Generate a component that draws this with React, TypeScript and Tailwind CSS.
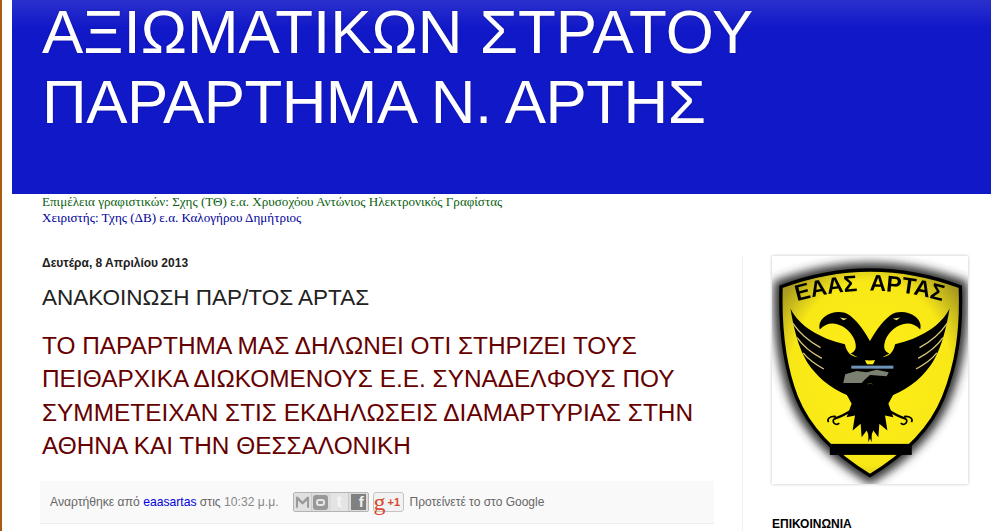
const postLines = [
  'ΤΟ ΠΑΡΑΡΤΗΜΑ ΜΑΣ ΔΗΛΩΝΕΙ ΟΤΙ ΣΤΗΡΙΖΕΙ ΤΟΥΣ',
  'ΠΕΙΘΑΡΧΙΚΑ ΔΙΩΚΟΜΕΝΟΥΣ Ε.Ε. ΣΥΝΑΔΕΛΦΟΥΣ ΠΟΥ',
  'ΣΥΜΜΕΤΕΙΧΑΝ ΣΤΙΣ ΕΚΔΗΛΩΣΕΙΣ ΔΙΑΜΑΡΤΥΡΙΑΣ ΣΤΗΝ',
  'ΑΘΗΝΑ ΚΑΙ ΤΗΝ ΘΕΣΣΑΛΟΝΙΚΗ',
]

function HalfEagle() {
  return (
    <g>
      {/* wing */}
      <path
        d="M182 205 C205 255 270 295 345 312 C350 338 368 356 400 350 L425 400 L395 476 C340 468 285 432 252 392 C222 358 198 305 182 205 Z"
        fill="#000"
      />
      {/* neck and head */}
      <path
        d="M424 310 C408 280 388 248 360 226 C340 210 303 214 284 230 C270 242 266 256 270 268 C285 252 302 247 322 252 C345 258 366 278 374 300 C380 318 380 332 362 340 L400 360 L425 360 Z"
        fill="#000"
      />
      <path d="M330 232 L352 236 L340 240 Z" fill="#e8e060" />
      <path d="M188 248 C210 280 240 305 272 322" stroke="#d8c878" strokeWidth="4" fill="none" />
      <path d="M202 292 C220 318 245 338 276 354" stroke="#d8c878" strokeWidth="4" fill="none" />
      <path d="M220 338 C236 358 256 372 282 386" stroke="#d8c878" strokeWidth="4" fill="none" />
      {/* body and tail */}
      <path
        d="M338 440 L425 430 L425 605 L410 570 L395 590 L392 550 L368 570 L375 525 L350 530 L365 490 Z"
        fill="#000"
      />
      {/* claw */}
      <path d="M372 505 C350 520 330 530 312 535" stroke="#000" strokeWidth="7" fill="none" />
      <path d="M318 528 C300 526 290 535 296 545 M312 535 C305 548 320 556 328 548" stroke="#000" strokeWidth="5" fill="none" />
    </g>
  )
}

function Emblem() {
  const shield = 'M154 140 Q420 40 690 140 C695 270 680 370 640 470 C600 570 510 650 420 705 C330 650 240 570 200 470 C165 380 150 270 154 140 Z'
  return (
    <svg viewBox="128 48 584 682" className="block h-full w-full">
      <defs>
        <filter id="edge" x="-15%" y="-15%" width="130%" height="130%">
          <feGaussianBlur stdDeviation="14" />
        </filter>
        <filter id="soft" x="-5%" y="-5%" width="110%" height="110%">
          <feGaussianBlur stdDeviation="1.6" />
        </filter>
        <radialGradient id="yellow" cx="50%" cy="50%" r="62%">
          <stop offset="0%" stopColor="#ffee10" />
          <stop offset="72%" stopColor="#f8e818" />
          <stop offset="100%" stopColor="#a89a20" />
        </radialGradient>
        <path id="arc" d="M186 188 Q420 116 652 188" />
      </defs>
      <path d={shield} fill="#222" stroke="#333" strokeWidth="44" filter="url(#edge)" />
      <g filter="url(#soft)">
        <path d={shield} fill="url(#yellow)" stroke="#000" strokeWidth="10" />
        <text fontFamily="'Liberation Sans', sans-serif" fontWeight="700" fontSize="68" fill="#000">
          <textPath href="#arc" startOffset="50%" textAnchor="middle" xmlSpace="preserve">
            ΕΑΑΣ  ΑΡΤΑΣ
          </textPath>
        </text>
        <HalfEagle />
        <g transform="translate(840 0) scale(-1 1)">
          <HalfEagle />
        </g>
        <rect x="362" y="372" width="128" height="58" fill="#000" />
        <rect x="364" y="376" width="126" height="9" fill="#6d93b8" />
        <path d="M340 428 L346 402 L380 392 L410 396 L440 388 L476 396 L470 408 L420 404 L404 418 L395 428 Z" fill="#7b8070" />
        <rect x="300" y="610" width="245" height="33" fill="#000" />
      </g>
    </svg>
  )
}

function ShareButtons() {
  return (
    <div className="flex items-center gap-[4px]">
      <div className="flex h-[20px] rounded-[2px] border border-[#b4b4b4] bg-[#c8c8c8]">
        <div className="flex w-[18.5px] items-center justify-center border-r border-[#cccccc] bg-[#e0e0e0]">
          <svg viewBox="0 0 16 12" className="h-[12px] w-[15px]">
            <path d="M1 12 V0.5 H3 L8 5.5 L13 0.5 H15 V12 H12.8 V4.5 L8 9 L3.2 4.5 V12 Z" fill="#9a9a9a" />
          </svg>
        </div>
        <div className="flex w-[18.5px] items-center justify-center border-r border-[#dcdcdc] bg-[#dcdcdc]">
          <div className="flex h-[15px] w-[15px] items-center justify-center rounded-[3px] bg-[#989898]">
            <div className="h-[7px] w-[9px] rounded-[3px] border-2 border-[#e6e6e6]" />
          </div>
        </div>
        <div className="flex w-[18.5px] items-center justify-center border-r border-[#c8c8c8] bg-[#e4e4e4]">
          <span className="text-[17px] leading-[18px] font-bold text-[#f4f4f4]">t</span>
        </div>
        <div className="flex w-[18.5px] items-center justify-center bg-[#dcdcdc]">
          <div className="flex h-[16px] w-[15px] items-center justify-end bg-[#808080] pr-[2px]">
            <span className="text-[15px] leading-[16px] font-bold text-[#eeeeee]">f</span>
          </div>
        </div>
      </div>
      <div className="flex h-[20px] w-[31px] items-center rounded-[3px] border border-[#c4c4c4] bg-[#f2f2f2]">
        <span className="font-['Liberation_Serif',serif] text-[24px] leading-[18px] text-[#d8472f]">g</span>
        <span className="ml-[2px] text-[11px] font-bold text-[#d8472f]">+1</span>
      </div>
    </div>
  )
}

export default function App() {
  return (
    <div className="flex h-[531px] w-[991px] overflow-hidden bg-white font-['Liberation_Sans',sans-serif]">
      <div className="h-full w-[2px] shrink-0 bg-[#a85a10]" />
      <div className="min-w-0 flex-1 pl-[10px]">
        <header className="h-[194px] bg-[linear-gradient(#2a30cc,#1118c8_28px)] pl-[30px] text-white [text-shadow:0_0_2px_rgba(0,0,0,0.3)]">
          <h1 className="flex flex-col gap-[7px] text-[61.9px] leading-[63px] whitespace-nowrap">
            <span>ΑΞΙΩΜΑΤΙΚΩΝ ΣΤΡΑΤΟΥ</span>
            <span className="tracking-[-0.55px]">ΠΑΡΑΡΤΗΜΑ Ν. ΑΡΤΗΣ</span>
          </h1>
        </header>

        <div className="pl-[30px] font-['Liberation_Serif',serif] text-[13.1px] leading-[16px]">
          <p className="text-[#0b5f10]">Επιμέλεια γραφιστικών: Σχης (ΤΘ) ε.α. Χρυσοχόου Αντώνιος Ηλεκτρονικός Γραφίστας</p>
          <p className="text-[#000099]">Χειριστής: Τχης (ΔΒ) ε.α. Καλογήρου Δημήτριος</p>
        </div>

        <div className="mt-[30px] flex">
          <main className="w-[731px] shrink-0 border-r border-[#eeeeee] pr-[28px] pl-[28px]">
            <div className="pl-[2px]">
              <h2 className="text-[12px] leading-[14px] font-bold text-[#222222]">Δευτέρα, 8 Απριλίου 2013</h2>
              <h3 className="mt-[15px] text-[22.5px] leading-[26px] text-[#222222]">ΑΝΑΚΟΙΝΩΣΗ ΠΑΡ/ΤΟΣ ΑΡΤΑΣ</h3>
              <div className="mt-[18px] text-[24.4px] leading-[33.3px] text-[#660000]">
                {postLines.map((line) => (
                  <p key={line} className="whitespace-nowrap">{line}</p>
                ))}
              </div>
            </div>
            <footer className="mt-[19px] flex h-[43px] items-center border-b border-[#eeeeee] bg-[#f9f9f9] pl-[10px] text-[12px] text-[#666666]">
              <span className="text-[12.15px]">
                Αναρτήθηκε από <a className="text-[#0000dd]">eaasartas</a> στις <span className="text-[#888888]">10:32 μ.μ.</span>
              </span>
              <div className="mr-[6px] ml-[14px]">
                <ShareButtons />
              </div>
              <span>Προτείνετέ το στο Google</span>
            </footer>
          </main>

          <aside className="flex-1 pl-[29px]">
            <div className="h-[228px] w-[196px] bg-white shadow-[0_0_3px_rgba(0,0,0,0.25)]">
              <Emblem />
            </div>
            <h2 className="mt-[33px] text-[12px] leading-[14px] font-bold text-black">ΕΠΙΚΟΙΝΩΝΙΑ</h2>
          </aside>
        </div>
      </div>
    </div>
  )
}
